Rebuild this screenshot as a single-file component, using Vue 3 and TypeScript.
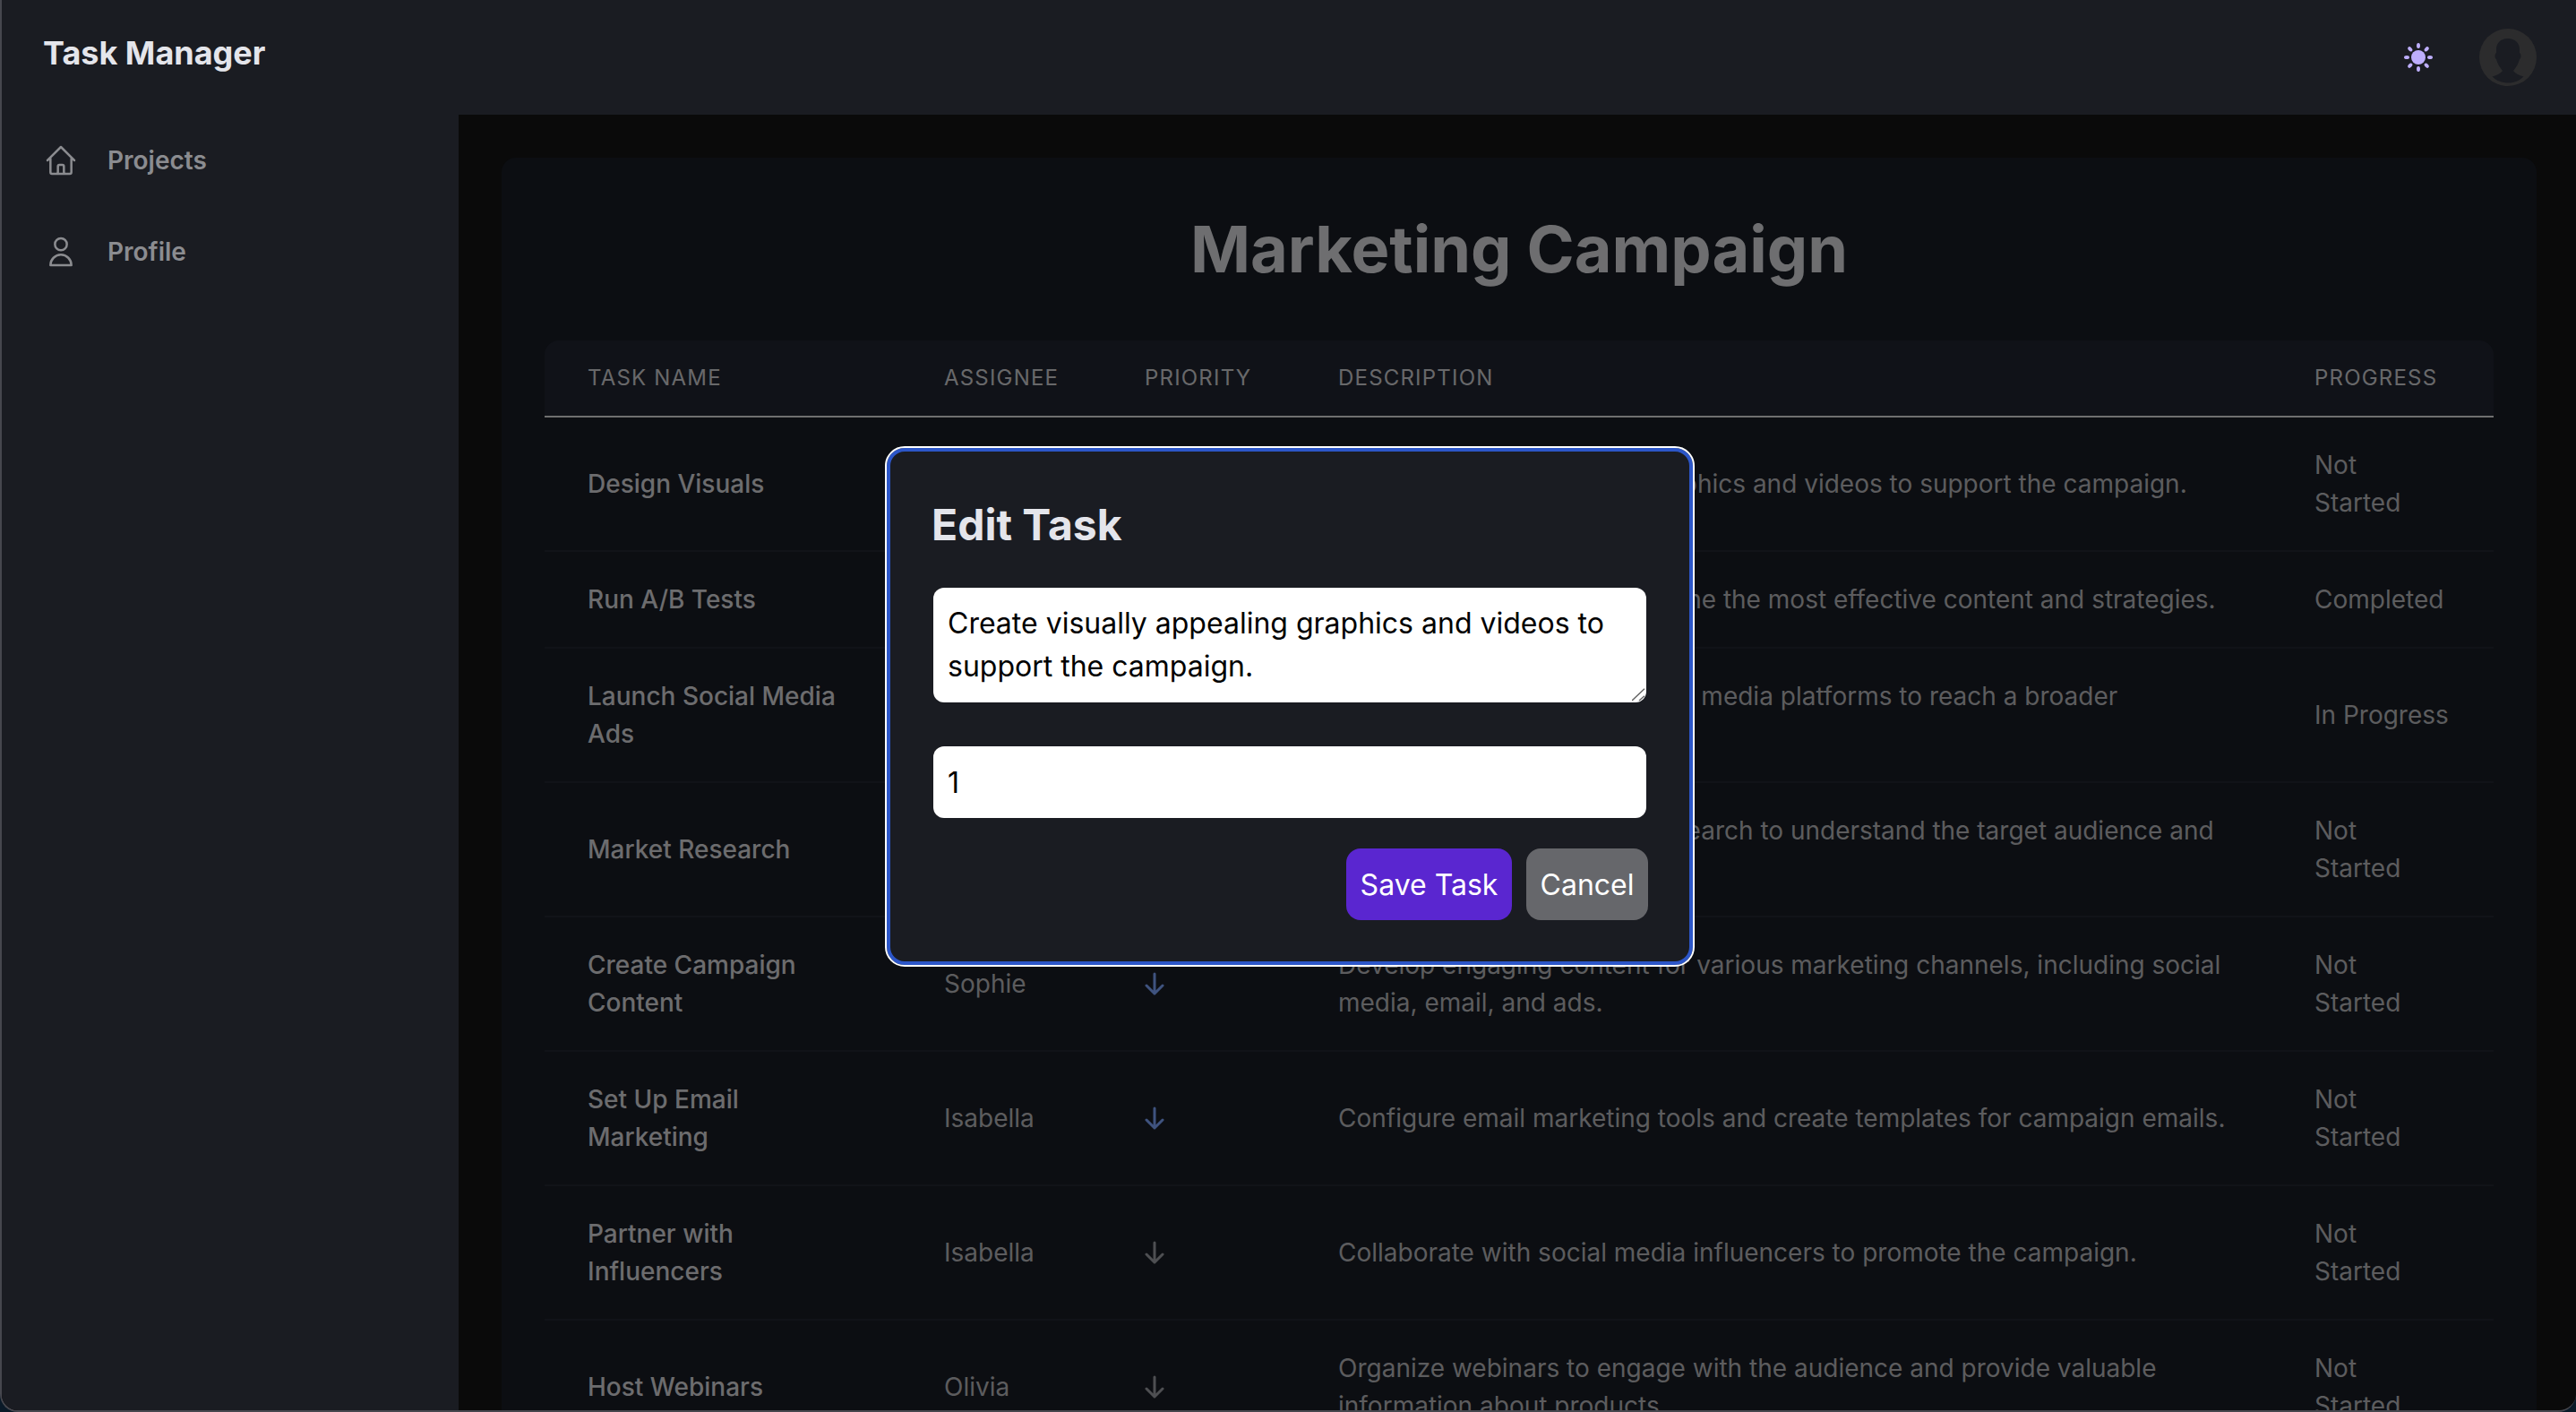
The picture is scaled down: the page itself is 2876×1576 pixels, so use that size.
<script setup lang="ts">
interface Task {
  name: string;
  assignee: string;
  priority: 'high' | 'low';
  description: string;
  progress: string;
}

const tasks: Task[] = [
  { name: 'Design Visuals', assignee: 'Sophie', priority: 'high', description: 'Create visually appealing graphics and videos to support the campaign.', progress: 'Not Started' },
  { name: 'Run A/B Tests', assignee: 'Olivia', priority: 'high', description: 'Organize A/B tests to determine the most effective content and strategies.', progress: 'Completed' },
  { name: 'Launch Social Media Ads', assignee: 'Emma', priority: 'high', description: 'Launch targeted ads on social media platforms to reach a broader audience.', progress: 'In Progress' },
  { name: 'Market Research', assignee: 'Olivia', priority: 'high', description: 'Conduct thorough market research to understand the target audience and competitors.', progress: 'Not Started' },
  { name: 'Create Campaign Content', assignee: 'Sophie', priority: 'high', description: 'Develop engaging content for various marketing channels, including social media, email, and ads.', progress: 'Not Started' },
  { name: 'Set Up Email Marketing', assignee: 'Isabella', priority: 'high', description: 'Configure email marketing tools and create templates for campaign emails.', progress: 'Not Started' },
  { name: 'Partner with Influencers', assignee: 'Isabella', priority: 'low', description: 'Collaborate with social media influencers to promote the campaign.', progress: 'Not Started' },
  { name: 'Host Webinars', assignee: 'Olivia', priority: 'low', description: 'Organize webinars to engage with the audience and provide valuable information about products.', progress: 'Not Started' },
];

const rays = [0, 45, 90, 135, 180, 225, 270, 315];
</script>

<template>
  <div class="app">
    <header class="topbar">
      <div class="brand">Task Manager</div>
      <div class="topbar-right">
        <svg class="sun" width="32" height="32" viewBox="0 0 32 32">
          <circle cx="16" cy="16" r="8" fill="#bdaefc" />
          <ellipse
            v-for="r in rays"
            :key="r"
            cx="16"
            cy="3"
            rx="2"
            ry="3"
            fill="#bdaefc"
            :transform="`rotate(${r} 16 16)`"
          />
        </svg>
        <svg class="avatar" width="64" height="64" viewBox="0 0 64 64">
          <circle cx="32" cy="32" r="32" fill="#2c2c2d" />
          <path
            fill="#1a1c22"
            d="M32 11C24 11 19 16 19 23L19 27C17 28 17 33 19 34C20 39 23 43 26 47C24 50 20 52 14.5 53.5C19 58 25 60.5 32 60.5C39 60.5 45 58 49.5 53.5C44 52 40 50 38 47C41 43 44 39 45 34C47 33 47 28 45 27L45 23C45 16 40 11 32 11Z"
          />
        </svg>
      </div>
    </header>

    <div class="body">
      <aside class="sidebar">
        <a class="nav-item">
          <svg width="40" height="40" viewBox="0 0 24 24" fill="none" stroke="currentColor" stroke-width="1.5" stroke-linecap="round" stroke-linejoin="round">
            <path d="M3 12l2-2m0 0l7-7 7 7M5 10v10a1 1 0 001 1h3m10-11l2 2m-2-2v10a1 1 0 01-1 1h-3m-6 0a1 1 0 001-1v-4a1 1 0 011-1h2a1 1 0 011 1v4a1 1 0 001 1m-6 0h6" />
          </svg>
          <span>Projects</span>
        </a>
        <a class="nav-item">
          <svg width="40" height="40" viewBox="0 0 24 24" fill="none" stroke="currentColor" stroke-width="1.5" stroke-linecap="round" stroke-linejoin="round">
            <path d="M16 7a4 4 0 11-8 0 4 4 0 018 0zM12 14a7 7 0 00-7 7h14a7 7 0 00-7-7z" />
          </svg>
          <span>Profile</span>
        </a>
      </aside>

      <main class="main">
        <section class="card">
          <h1 class="title">Marketing Campaign</h1>
          <table class="tasks">
            <colgroup>
              <col style="width: 398px" />
              <col style="width: 224px" />
              <col style="width: 216px" />
              <col style="width: 1090px" />
              <col style="width: 248px" />
            </colgroup>
            <thead>
              <tr>
                <th>Task Name</th>
                <th>Assignee</th>
                <th>Priority</th>
                <th>Description</th>
                <th>Progress</th>
              </tr>
            </thead>
            <tbody>
              <tr v-for="task in tasks" :key="task.name">
                <td class="name">{{ task.name }}</td>
                <td>{{ task.assignee }}</td>
                <td>
                  <svg :class="['arrow', task.priority]" width="22" height="26" viewBox="0 0 22 26" fill="none" stroke="currentColor" stroke-width="3" stroke-linecap="round" stroke-linejoin="round">
                    <path d="M11 2V24M2 15L11 24L20 15" />
                  </svg>
                </td>
                <td>{{ task.description }}</td>
                <td>
                  <span :class="{ stacked: task.progress === 'Not Started' }">{{ task.progress }}</span>
                </td>
              </tr>
            </tbody>
          </table>
        </section>
      </main>
    </div>

    <div class="overlay">
      <div class="modal">
        <h2 class="modal-title">Edit Task</h2>
        <div class="area-wrap">
          <textarea class="field area">Create visually appealing graphics and videos to support the campaign.</textarea>
          <svg class="grip" width="16" height="16" viewBox="0 0 16 16" fill="none" stroke="#666" stroke-width="1.5">
            <path d="M0 14L14 0.7M8 14L14 8.7" />
          </svg>
        </div>
        <input class="field line" type="text" value="1" />
        <div class="actions">
          <button class="btn save">Save Task</button>
          <button class="btn cancel">Cancel</button>
        </div>
      </div>
    </div>
  </div>
</template>

<style scoped>
.app {
  position: relative;
  box-sizing: border-box;
  height: 100vh;
  display: flex;
  flex-direction: column;
  overflow: hidden;
  border-left: 2px solid #46474e;
  border-bottom: 2px solid #46474e;
  border-radius: 0 0 20px 20px;
  background: #141414;
  font-family: Inter, "Liberation Sans", sans-serif;
}

.topbar {
  position: relative;
  z-index: 60;
  flex: none;
  height: 128px;
  box-sizing: border-box;
  padding: 32px 44px 0 46px;
  display: flex;
  justify-content: space-between;
  background: #1a1c22;
}

.brand {
  font-size: 36px;
  line-height: 54px;
  font-weight: 700;
  color: #e4e5eb;
}

.topbar-right {
  display: flex;
  align-items: center;
  gap: 52px;
  height: 64px;
}

.body {
  flex: 1;
  min-height: 0;
  display: flex;
}

.sidebar {
  position: relative;
  z-index: 60;
  flex: none;
  width: 510px;
  box-sizing: border-box;
  padding: 0 0 0 46px;
  background: #1a1c22;
  color: #8b8c90;
}

.nav-item {
  height: 102px;
  display: flex;
  align-items: center;
  gap: 32px;
  font-size: 28px;
  font-weight: 600;
}

.main {
  flex: 1;
  min-width: 0;
  padding: 48px 44px 0 48px;
}

.card {
  padding: 48px;
  background: #181c24;
  border-radius: 16px 16px 0 0;
}

.title {
  margin: 0 0 48px;
  text-align: center;
  font-size: 72px;
  line-height: 108px;
  font-weight: 700;
  color: #dcdde0;
}

.tasks {
  width: 100%;
  table-layout: fixed;
  border-collapse: collapse;
}

.tasks th {
  padding: 24px 48px;
  background: #202430;
  border-bottom: 2px solid #dedede;
  text-align: left;
  text-transform: uppercase;
  font-size: 24px;
  line-height: 36px;
  font-weight: 400;
  letter-spacing: 1.2px;
  color: #d0d1d4;
}

.tasks th:first-child {
  border-top-left-radius: 16px;
}

.tasks th:last-child {
  border-top-right-radius: 16px;
}

.tasks td {
  padding: 32px 48px;
  border-bottom: 2px solid #232730;
  font-size: 28px;
  line-height: 42px;
  color: #b8b9bc;
}

.tasks td.name {
  color: #d8d9dc;
  font-weight: 500;
}

.stacked {
  display: inline-block;
  width: min-content;
}

.arrow {
  display: block;
}

.arrow.high {
  color: #7ea6ff;
}

.arrow.low {
  color: #9c9ea4;
}

.overlay {
  position: absolute;
  inset: 0;
  z-index: 50;
  box-sizing: border-box;
  padding: 3px 0 0 2px;
  display: flex;
  align-items: center;
  justify-content: center;
  background: rgba(0, 0, 0, 0.5);
}

.modal {
  box-sizing: border-box;
  width: 900px;
  height: 577px;
  padding: 52px 44px 0 48px;
  background: #1a1c22;
  border: 4px solid #2c56c8;
  outline: 2px solid #fff;
  border-radius: 20px;
  display: flex;
  flex-direction: column;
}

.modal-title {
  margin: 0 0 40px -2px;
  font-size: 48px;
  line-height: 60px;
  font-weight: 700;
  color: #e4e5eb;
}

.area-wrap {
  position: relative;
  flex: none;
  width: 796px;
  height: 128px;
  margin-bottom: 49px;
}

.field {
  box-sizing: border-box;
  width: 796px;
  padding: 8px 16px;
  border: 0;
  outline: 0;
  border-radius: 12px;
  background: #fff;
  color: #000;
  font-family: inherit;
  font-size: 32px;
  line-height: 48px;
}

.area {
  display: block;
  height: 128px;
  padding: 16px;
  resize: none;
}

.grip {
  position: absolute;
  right: 0;
  bottom: 0;
  pointer-events: none;
}

.line {
  flex: none;
  height: 80px;
  margin-bottom: 34px;
}

.actions {
  display: flex;
  justify-content: flex-end;
  gap: 16px;
  width: 798px;
}

.btn {
  height: 80px;
  padding: 0;
  border: 0;
  border-radius: 16px;
  color: #fff;
  font-family: inherit;
  font-size: 32px;
  font-weight: 400;
}

.save {
  width: 185px;
  background: #5a26d0;
}

.cancel {
  width: 136px;
  background: #66676b;
}
</style>

<style>
html,
body {
  background: #0a1a28;
}
</style>
